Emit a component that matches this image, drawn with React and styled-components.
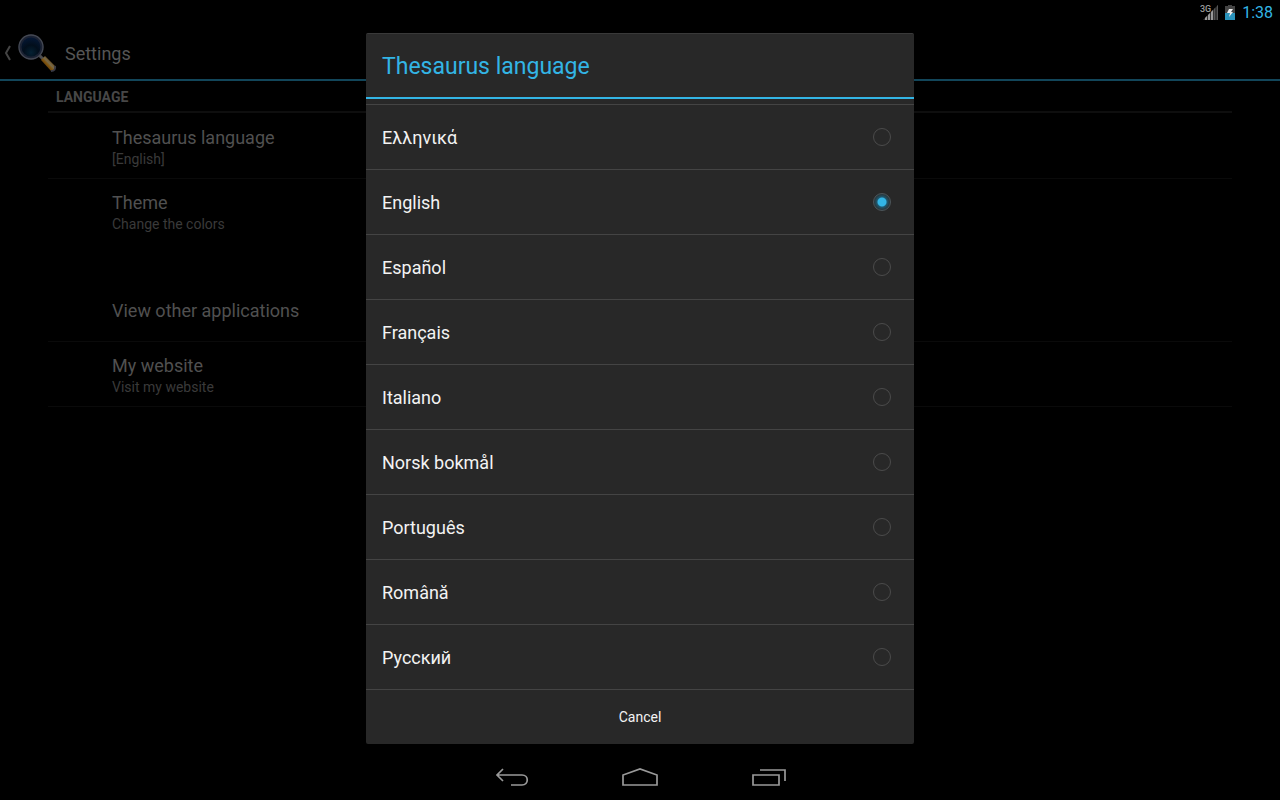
import { useState } from "react";
import styled, { createGlobalStyle } from "styled-components";

const GlobalStyle = createGlobalStyle`
  * {
    box-sizing: border-box;
  }
  body {
    margin: 0;
    background: #000;
    color: #f3f3f3;
    font-family: Roboto, "Noto Sans", sans-serif;
  }
  button, input {
    font: inherit;
    color: inherit;
    margin: 0;
  }
  button {
    background: none;
    border: 0;
    padding: 0;
    cursor: pointer;
  }
`;

const Screen = styled.div`
  min-height: 100vh;
  display: flex;
  flex-direction: column;
`;

const StatusBar = styled.header`
  height: 25px;
  padding: 0 7px;
  display: flex;
  align-items: center;
  justify-content: flex-end;
  gap: 7px;
  svg {
    display: block;
  }
`;

const Clock = styled.time`
  font-size: 16px;
  line-height: 24px;
  color: #33b5e5;
`;

const Content = styled.main`
  flex: 1;
  position: relative;
`;

const ActionBar = styled.div`
  height: 56px;
  padding: 2px 0 0 3px;
  display: flex;
  align-items: center;
  gap: 8px;
  border-bottom: 2px solid #12465a;
`;

const UpButton = styled.button`
  display: flex;
  align-items: center;
  gap: 4px;
`;

const PageTitle = styled.h1`
  margin: 0;
  padding-top: 2px;
  font-size: 18px;
  line-height: 24px;
  font-weight: 400;
  color: #555;
`;

const Preferences = styled.div`
  padding: 0 48px;
`;

const Category = styled.h2`
  margin: 0 0 1px;
  height: 32px;
  padding: 0 8px;
  font-size: 14px;
  line-height: 32px;
  font-weight: 700;
  text-transform: uppercase;
  color: #474747;
  border-bottom: 2px solid ${props => props.$plain ? "transparent" : "#0e0e0e"};
`;

const Preference = styled.button`
  display: flex;
  flex-direction: column;
  justify-content: center;
  width: 100%;
  height: 65px;
  padding: 4px 0 0 64px;
  text-align: left;
  border-bottom: 1px solid ${props => props.$last ? "transparent" : "#0a0a0a"};
`;

const PreferenceTitle = styled.span`
  font-size: 18px;
  line-height: 22px;
  color: #505050;
`;

const Summary = styled.span`
  font-size: 14px;
  line-height: 20px;
  color: #3a3a3a;
`;

const Overlay = styled.div`
  position: absolute;
  inset: 0;
  display: flex;
  align-items: center;
  justify-content: center;
`;

const Dialog = styled.form`
  width: 100%;
  max-width: 548px;
  background: #282828;
  border-top: 1px solid #393939;
  border-radius: 2px;
`;

const DialogTitle = styled.h2`
  margin: 0;
  padding: 3px 16px 0;
  font-size: 23px;
  line-height: 60px;
  font-weight: 400;
  color: #33b5e5;
  border-bottom: 2px solid #33b5e5;
`;

const Choices = styled.div`
  padding-top: 5px;
`;

const Choice = styled.label`
  height: 65px;
  padding: 0 16px;
  display: flex;
  align-items: center;
  justify-content: space-between;
  border-top: 1px solid #444;
  cursor: pointer;
`;

const ChoiceName = styled.span`
  padding-top: 2px;
  font-size: 18px;
  line-height: 24px;
`;

const Radio = styled.input`
  appearance: none;
  width: 18px;
  height: 18px;
  margin: 0 7px;
  border: 1px solid #4b4b4b;
  border-radius: 50%;
  &:checked {
    border-color: #4b555a;
    background: radial-gradient(circle, #33b5e5 0 4px, #1f5870 5px, #264049 7px, #29343a 8px);
  }
`;

const CancelButton = styled.button`
  display: block;
  width: 100%;
  height: 55px;
  border-top: 1px solid #444;
  font-size: 14px;
  line-height: 20px;
`;

const NavBar = styled.nav`
  height: 48px;
  display: flex;
  align-items: center;
  justify-content: center;
`;

const NavButton = styled.button`
  width: 128px;
  height: 48px;
  padding-top: 2px;
  svg {
    display: block;
    margin: 0 auto;
  }
`;

const SignalIcon = () => (
  <svg width="18" height="17" viewBox="0 0 18 17">
    <text x="0" y="8" fontSize="9" fontFamily="Roboto" fontWeight="500" fill="#999">3G</text>
    <path d="M18 1v15H3z" fill="#333" />
    <path d="M5 16v-2l2-2v4zM8 16v-5l2-2v7zM11 16V8l2-2v10z" fill="#999" />
    <path d="M14 16V5l1-1v12zM17 16V2l1-1v15z" fill="#555" />
  </svg>
);

const BatteryIcon = () => (
  <svg width="10" height="16" viewBox="0 0 10 16">
    <path d="M3 0h4v1h3v7H0V1h3z" fill="#444" />
    <path d="M0 8h10v7H0z" fill="#2b93bb" />
    <path d="M4 4h4L6 7h2l-4 5 1-4H2z" fill="#eee" />
  </svg>
);

const MagnifierIcon = () => (
  <svg width="40" height="40" viewBox="0 0 40 40">
    <defs>
      <radialGradient id="lens" cx="50%" cy="75%" r="75%">
        <stop offset="0" stopColor="#052133" />
        <stop offset="0.45" stopColor="#020e1b" />
        <stop offset="1" stopColor="#05193a" />
      </radialGradient>
      <linearGradient id="handle" x1="0" y1="1" x2="1" y2="0">
        <stop offset="0.25" stopColor="#4c2e06" />
        <stop offset="0.45" stopColor="#80540e" />
        <stop offset="0.55" stopColor="#75694a" />
        <stop offset="0.75" stopColor="#6a420a" />
      </linearGradient>
    </defs>
    <path d="M22 22l5 5" stroke="#4d4d50" strokeWidth="3" />
    <path d="M28 23L38 33q1 5-4 5L24 27z" fill="url(#handle)" />
    <path d="M34 38q5 0 4-5" stroke="#3a3a44" strokeWidth="2" fill="none" />
    <circle cx="14" cy="14" r="11" fill="url(#lens)" stroke="#1b2233" strokeWidth="3" />
    <circle cx="14" cy="14" r="12" fill="none" stroke="#444852" strokeWidth="1.3" />
  </svg>
);

const BackIcon = () => (
  <svg width="34" height="20" viewBox="0 0 34 20" fill="none" stroke="#999" strokeWidth="1.7">
    <path d="M8 2L2 8l6 6M2 8h25c7 0 7 10 0 10H16" />
  </svg>
);

const HomeIcon = () => (
  <svg width="36" height="20" viewBox="0 0 36 20" fill="none" stroke="#999" strokeWidth="1.7">
    <path d="M1 18V8l17-6 17 6v10z" />
  </svg>
);

const RecentIcon = () => (
  <svg width="36" height="20" viewBox="0 0 36 20" fill="none" stroke="#999" strokeWidth="1.7">
    <path d="M3 8h26v10H3zM10 3h25v11" />
  </svg>
);

const languages = [
  "Ελληνικά",
  "English",
  "Español",
  "Français",
  "Italiano",
  "Norsk bokmål",
  "Português",
  "Română",
  "Русский",
];

export default function App() {
  const [language, setLanguage] = useState("English");

  return (
    <Screen>
      <GlobalStyle />
      <StatusBar>
        <SignalIcon />
        <BatteryIcon />
        <Clock>1:38</Clock>
      </StatusBar>
      <Content>
        <ActionBar>
          <UpButton aria-label="Back">
            <svg width="10" height="16" viewBox="0 0 10 16" fill="none" stroke="#444" strokeWidth="2">
              <path d="M7 1L3 8l4 7" />
            </svg>
            <MagnifierIcon />
          </UpButton>
          <PageTitle>Settings</PageTitle>
        </ActionBar>
        <Preferences>
          <Category>Language</Category>
          <Preference>
            <PreferenceTitle>Thesaurus language</PreferenceTitle>
            <Summary>[{language}]</Summary>
          </Preference>
          <Preference $last>
            <PreferenceTitle>Theme</PreferenceTitle>
            <Summary>Change the colors</Summary>
          </Preference>
          <Category $plain />
          <Preference>
            <PreferenceTitle>View other applications</PreferenceTitle>
          </Preference>
          <Preference>
            <PreferenceTitle>My website</PreferenceTitle>
            <Summary>Visit my website</Summary>
          </Preference>
        </Preferences>
        <Overlay>
          <Dialog role="dialog" aria-labelledby="dialog-title">
            <DialogTitle id="dialog-title">Thesaurus language</DialogTitle>
            <Choices>
              {languages.map(name => (
                <Choice key={name}>
                  <ChoiceName>{name}</ChoiceName>
                  <Radio
                    type="radio"
                    name="language"
                    checked={language === name}
                    onChange={() => setLanguage(name)}
                  />
                </Choice>
              ))}
            </Choices>
            <CancelButton type="button">Cancel</CancelButton>
          </Dialog>
        </Overlay>
      </Content>
      <NavBar>
        <NavButton aria-label="Back"><BackIcon /></NavButton>
        <NavButton aria-label="Home"><HomeIcon /></NavButton>
        <NavButton aria-label="Recent apps"><RecentIcon /></NavButton>
      </NavBar>
    </Screen>
  );
}
